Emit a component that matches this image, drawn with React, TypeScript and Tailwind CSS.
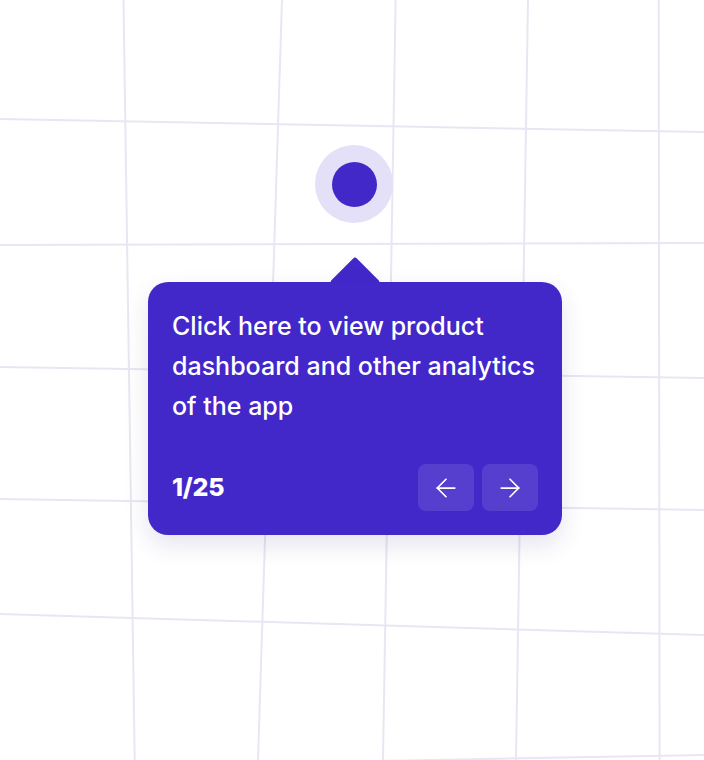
import { ArrowLeft, ArrowRight } from "lucide-react";

// grid lines on the canvas, slightly skewed as in the shot
const vLines = [
  [123.5, 134.7],
  [282, 258],
  [395.6, 383],
  [528, 516],
  [658.7, 659.6],
];
const hLines = [
  [119, 132],
  [245, 243],
  [367, 378],
  [499, 510],
  [614, 635],
  [768, 755],
];

function GridBackground() {
  return (
    <svg className="absolute inset-0" width={704} height={760} viewBox="0 0 704 760" aria-hidden>
      {vLines.map(([top, bottom], i) => (
        <line key={`v${i}`} x1={top} y1={0} x2={bottom} y2={760} stroke="#e7e7f3" strokeWidth={2} />
      ))}
      {hLines.map(([left, right], i) => (
        <line key={`h${i}`} x1={0} y1={left} x2={704} y2={right} stroke="#e7e7f3" strokeWidth={2} />
      ))}
    </svg>
  );
}

export default function App() {
  return (
    <div className="relative w-[704px] h-[760px] bg-white overflow-hidden" style={{ fontFamily: "Inter, 'Noto Sans', sans-serif" }}>
      <GridBackground />

      {/* hotspot */}
      <div className="absolute left-[315px] top-[145px] w-[78px] h-[78px] rounded-full bg-[#e4e0f7] flex items-center justify-center">
        <div className="w-[45px] h-[45px] rounded-full bg-[#4328c9]" />
      </div>

      {/* tooltip */}
      <div className="absolute left-[148px] top-[282px] w-[414px]">
        <div className="absolute left-[189px] -top-[18px] w-[36px] h-[36px] rotate-45 rounded-[3px] bg-[#4328c9]" />
        <div className="relative rounded-[20px] bg-[#4328c9] px-6 pt-6 pb-6 shadow-[0_10px_24px_rgba(40,30,120,0.12)]">
          <p className="text-[25px] leading-[40px] font-[450] text-white tracking-[0.0em] whitespace-nowrap">
            Click here to view product
            <br />
            dashboard and other analytics
            <br />
            of the app
          </p>
          <div className="mt-[38px] flex items-center justify-between">
            <span className="text-[25px] font-extrabold text-white tracking-[-0.01em]">1/25</span>
            <div className="flex gap-2">
              <button type="button" className="w-14 h-[47px] rounded-lg bg-white/10 flex items-center justify-center text-white">
                <ArrowLeft className="w-[30px] h-[30px]" strokeWidth={1.4} />
              </button>
              <button type="button" className="w-14 h-[47px] rounded-lg bg-white/10 flex items-center justify-center text-white">
                <ArrowRight className="w-[30px] h-[30px]" strokeWidth={1.4} />
              </button>
            </div>
          </div>
        </div>
      </div>
    </div>
  );
}
